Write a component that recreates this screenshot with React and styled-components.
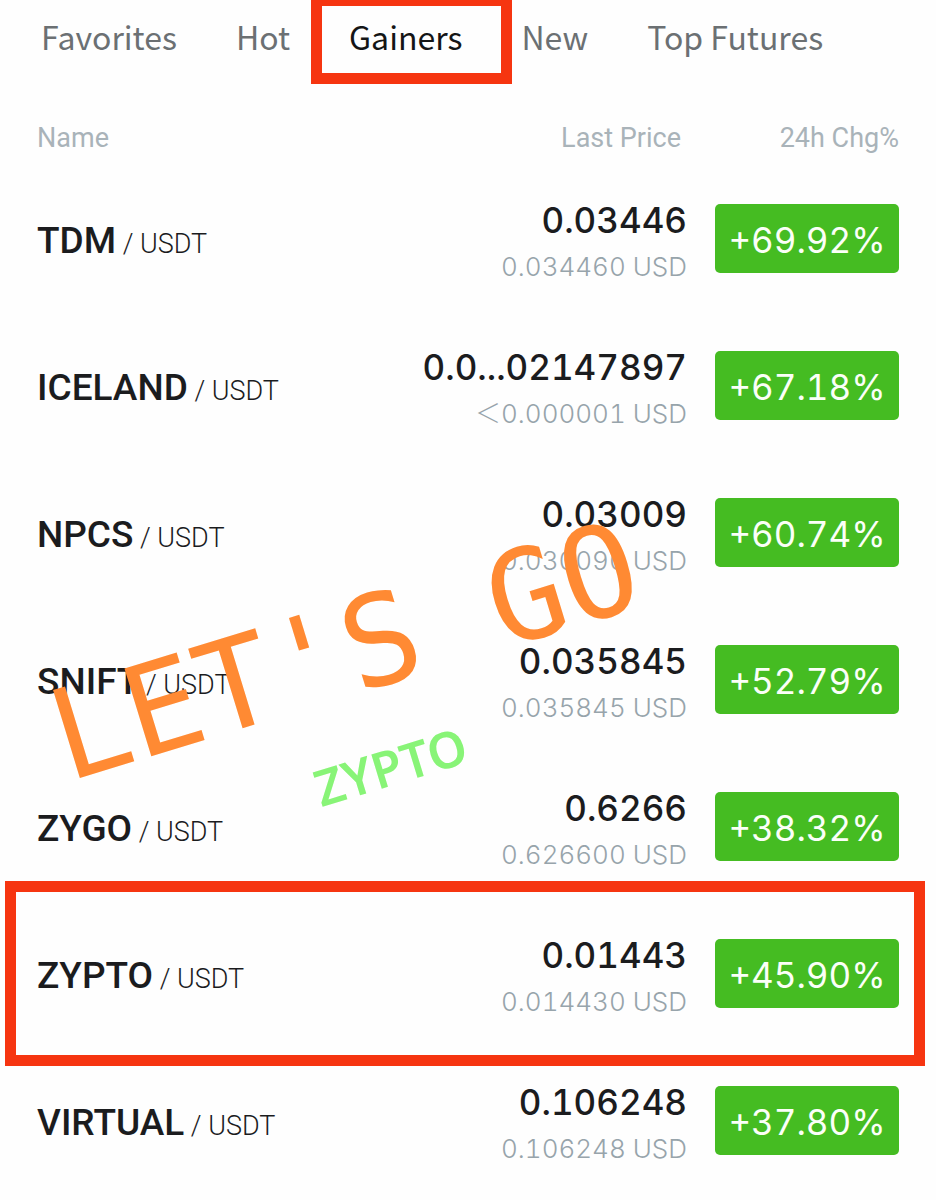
import React, { useState } from 'react'
import styled, { createGlobalStyle } from 'styled-components'

const GlobalStyle = createGlobalStyle`
    *{
        box-sizing:border-box;
    }
    body{
        margin:0;
        background-color:#fefefe;
        color:#1b1c1e;
        font-family:Roboto, 'Liberation Sans', sans-serif;
    }
`
const Container = styled.main`
    position:relative;
    overflow:hidden;
`
const Tabs = styled.nav`
    display:flex;
    gap:59px;
    height:111px;
    padding:14px 41px 0;
`
const Tab = styled.button`
    position:relative;
    height:44px;
    padding:0;
    border:none;
    background:none;
    white-space:nowrap;
    font-family:'Noto Sans CJK SC', 'Noto Sans', sans-serif;
    font-size:32px;
    line-height:44px;
    color:${(props) => props.$active ? "#141516" : "#6b7073"};
    cursor:pointer;
`
//marco rojo alrededor de la tab activa
const TabMark = styled.span`
    position:absolute;
    top:-19px;
    bottom:-26px;
    left:-38px;
    right:-50px;
    border:11px solid #f63510;
    pointer-events:none;
`
const Table = styled.table`
    width:100%;
    border-collapse:collapse;
    table-layout:fixed;
`
const Head = styled.th`
    width:${(props) => props.$width};
    height:54px;
    padding:${(props) => props.$pad};
    text-align:${(props) => props.$align || "right"};
    font-size:27px;
    font-weight:400;
    color:#a9b3b9;
`
const Row = styled.tr`
    position:relative;
    height:147px;
`
const RowMark = styled.span`
    position:absolute;
    top:-19px;
    bottom:-19px;
    left:5px;
    right:11px;
    border:11px solid #f63510;
    pointer-events:none;
`
const NameCell = styled.td`
    padding:8px 0 0 37px;
    white-space:nowrap;
    font-size:27px;
    font-weight:300;
    line-height:48px;
`
const Coin = styled.span`
    font-size:37px;
    font-weight:500;
`
const PriceCell = styled.td`
    padding:8px 0 0;
    text-align:right;
    white-space:nowrap;
    font-family:Inter, 'Noto Sans CJK SC', sans-serif;
    font-variant-numeric:tabular-nums;
`
const Price = styled.div`
    font-size:35px;
    font-weight:500;
    line-height:48px;
`
const Usd = styled.div`
    font-size:26px;
    font-weight:300;
    line-height:46px;
    color:#97a4ab;
`
const ChangeCell = styled.td`
    padding:0 37px 0 28px;
`
const Change = styled.div`
    height:69px;
    border-radius:5px;
    background-color:#45bc22;
    color:#fbfff8;
    text-align:center;
    font-family:Inter, sans-serif;
    font-size:35px;
    font-variant-numeric:tabular-nums;
    line-height:72px;
`
const Shout = styled.div`
    position:absolute;
    top:${(props) => props.$top};
    left:${(props) => props.$left};
    transform-origin:0 100%;
    transform:rotate(-17deg);
    white-space:nowrap;
    line-height:1;
    pointer-events:none;
`
const BigShout = styled(Shout)`
    font-family:'DejaVu Sans Mono', monospace;
    font-size:126px;
    color:#ff8a33;
`
const SmallShout = styled(Shout)`
    font-family:'Noto Sans', sans-serif;
    font-size:50px;
    font-weight:600;
    color:#88f477;
`

const tabs = ["Favorites", "Hot", "Gainers", "New", "Top Futures"]

const coins = [
    { name: "TDM", price: "0.03446", usd: "0.034460 USD", change: "+69.92%" },
    { name: "ICELAND", price: "0.0...02147897", usd: "＜0.000001 USD", change: "+67.18%" },
    { name: "NPCS", price: "0.03009", usd: "0.030090 USD", change: "+60.74%" },
    { name: "SNIFT", price: "0.035845", usd: "0.035845 USD", change: "+52.79%" },
    { name: "ZYGO", price: "0.6266", usd: "0.626600 USD", change: "+38.32%" },
    { name: "ZYPTO", price: "0.01443", usd: "0.014430 USD", change: "+45.90%", marked: true },
    { name: "VIRTUAL", price: "0.106248", usd: "0.106248 USD", change: "+37.80%" },
]

const App = () => {
    const [active, setActive] = useState("Gainers")
  return (
   <Container>
       <GlobalStyle/>
       <Tabs>
           {tabs.map((tab) => (
               <Tab key={tab} $active={tab === active} onClick={()=>setActive(tab)}>
                   {tab}
                   {tab === active && <TabMark/>}
               </Tab>
           ))}
       </Tabs>
       <Table>
           <thead>
               <tr>
                   <Head scope="col" $align="left" $pad="0 0 0 37px">Name</Head>
                   <Head scope="col" $width="300px" $pad="0 6px 0 0">Last Price</Head>
                   <Head scope="col" $width="249px" $pad="0 37px 0 0">24h Chg%</Head>
               </tr>
           </thead>
           <tbody>
               {coins.map((coin) => (
                   <Row key={coin.name}>
                       <NameCell>
                           <Coin>{coin.name}</Coin> / USDT
                           {coin.marked && <RowMark/>}
                       </NameCell>
                       <PriceCell>
                           <Price>{coin.price}</Price>
                           <Usd>{coin.usd}</Usd>
                       </PriceCell>
                       <ChangeCell>
                           <Change>{coin.change}</Change>
                       </ChangeCell>
                   </Row>
               ))}
           </tbody>
       </Table>
       <BigShout $top="675px" $left="73px">LET'S GO</BigShout>
       <SmallShout $top="763px" $left="323px">ZYPTO</SmallShout>
   </Container>
  )
}

export default App
